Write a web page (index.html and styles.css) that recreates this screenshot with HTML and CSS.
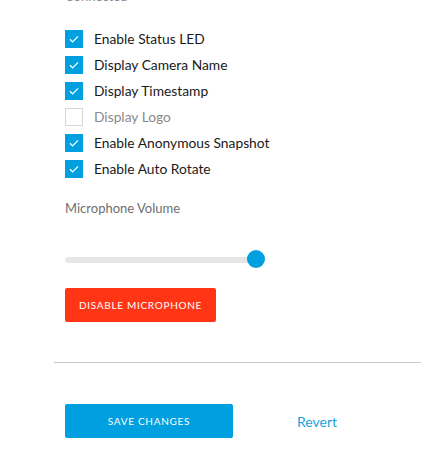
FILE: index.html
```html
<!DOCTYPE html>
<html>
<head>
<meta charset="utf-8">
<link rel="stylesheet" href="styles.css">
</head>
<body>
<div class="page">
  <div class="section">
    <div class="status">Connected</div>
    <ul class="checks">
      <li class="check"><span class="box on"><svg viewBox="0 0 18 18"><path d="M5 9.3l2.6 2.6L13 6.4"/></svg></span><span class="label">Enable Status LED</span></li>
      <li class="check"><span class="box on"><svg viewBox="0 0 18 18"><path d="M5 9.3l2.6 2.6L13 6.4"/></svg></span><span class="label">Display Camera Name</span></li>
      <li class="check"><span class="box on"><svg viewBox="0 0 18 18"><path d="M5 9.3l2.6 2.6L13 6.4"/></svg></span><span class="label">Display Timestamp</span></li>
      <li class="check"><span class="box"></span><span class="label off">Display Logo</span></li>
      <li class="check"><span class="box on"><svg viewBox="0 0 18 18"><path d="M5 9.3l2.6 2.6L13 6.4"/></svg></span><span class="label">Enable Anonymous Snapshot</span></li>
      <li class="check"><span class="box on"><svg viewBox="0 0 18 18"><path d="M5 9.3l2.6 2.6L13 6.4"/></svg></span><span class="label">Enable Auto Rotate</span></li>
    </ul>
    <div class="field-label">Microphone Volume</div>
    <div class="slider">
      <div class="track"></div>
      <div class="thumb"></div>
    </div>
    <button class="btn btn-red">Disable Microphone</button>
  </div>
  <div class="footer">
    <button class="btn btn-blue">Save Changes</button>
    <a class="revert">Revert</a>
  </div>
</div>
</body>
</html>
```
FILE: styles.css
```css
html, body {
  margin: 0;
  padding: 0;
  background: #fff;
  overflow: hidden;
}
body {
  font-family: Lato, "Open Sans", sans-serif;
  color: #1c1c1c;
}
.page {
  padding-left: 54px;
}
.section {
  padding-left: 11px;
  padding-bottom: 40px;
  border-bottom: 1px solid #c9c9c9;
}
.status {
  font-size: 13px;
  line-height: 16px;
  color: #8a8a8a;
  margin-top: -12px;
  height: 16px;
}
.checks {
  list-style: none;
  margin: 22px 0 0 0;
  padding: 0;
}
.check {
  display: flex;
  align-items: center;
  height: 26px;
}
.box {
  width: 18px;
  height: 18px;
  box-sizing: border-box;
  border: 1px solid #d6d6d6;
  background: #fff;
  margin-right: 11px;
  flex: none;
}
.box.on {
  background: #009fdf;
  border-color: #009fdf;
}
.box svg {
  display: block;
  width: 18px;
  height: 18px;
  margin: -1px;
}
.box svg path {
  fill: none;
  stroke: #fff;
  stroke-width: 1.3;
}
.label {
  font-size: 13.8px;
  line-height: 18px;
  color: #1a1a1a;
}
.label.off {
  color: #8a8a8a;
}
.field-label {
  margin-top: 18px;
  font-size: 13px;
  line-height: 16px;
  color: #6f6f6f;
}
.slider {
  position: relative;
  margin-top: 34px;
  width: 200px;
  height: 18px;
}
.track {
  position: absolute;
  left: 0;
  top: 7px;
  width: 190px;
  height: 6px;
  border-radius: 3px;
  background: #e6e6e6;
}
.thumb {
  position: absolute;
  left: 182px;
  top: 0;
  width: 18px;
  height: 18px;
  border-radius: 50%;
  background: #009fdf;
}
.btn {
  display: block;
  border: none;
  border-radius: 2px;
  height: 34px;
  font-family: Lato, "Open Sans", sans-serif;
  font-size: 10px;
  letter-spacing: 0.7px;
  text-transform: uppercase;
  color: #fff;
  padding: 0;
  cursor: pointer;
}
.btn-red {
  margin-top: 20px;
  width: 151px;
  background: #ff3516;
}
.btn-blue {
  width: 168px;
  background: #009fdf;
}
.footer {
  display: flex;
  align-items: center;
  padding-left: 11px;
  margin-top: 41px;
}
.revert {
  margin-left: 64px;
  font-size: 14px;
  color: #1ba1e2;
}
```
